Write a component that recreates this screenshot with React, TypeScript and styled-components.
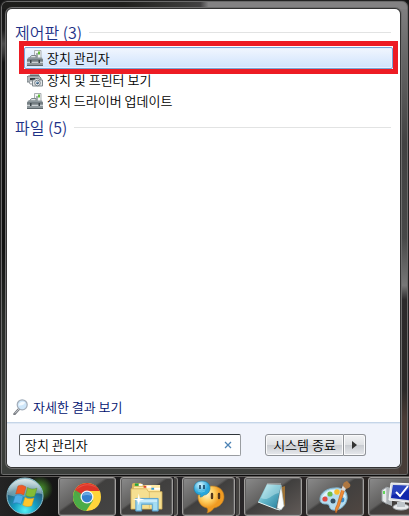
import React, { useState } from "react";
import styled, { createGlobalStyle, css } from "styled-components";

const GlobalStyle = createGlobalStyle`
  * { box-sizing: border-box; }
  body {
    margin: 0;
    background: #151515;
    font-family: "Noto Sans CJK KR", "Noto Sans", sans-serif;
    font-size: 13px;
    font-weight: 350;
    line-height: 20px;
    color: #000;
    overflow: hidden;
  }
  button, input { font: inherit; color: inherit; margin: 0; }
`;

const Desktop = styled.div`
  display: flex;
  flex-direction: column;
  min-height: 100vh;
`;

const MenuFrame = styled.main`
  flex: 1;
  display: flex;
  border: 1px solid #232323;
  border-bottom-color: #0c0c0c;
  border-radius: 7px 7px 3px 3px;
  padding: 8px 8px 8px 6px;
  box-shadow: inset 0 0 0 1px #6a6a6a;
  background:
    linear-gradient(90deg, #1d1d1b, #20201e 30%, #3a3a39 45%, #424142 49%, #838283 51%, #838283) top / 100% 8px no-repeat,
    linear-gradient(180deg, #838283 0, #666 12%, #424242 30%, #484848 50%, #777 60%, #2c2a2b 63%, #2b2928 82%, #4a3b35 88%, #463c38) right / 9px 100% no-repeat,
    linear-gradient(90deg, #3b3e3b, #3c3e3b 60%, #4b413c) bottom / 100% 8px no-repeat,
    linear-gradient(180deg, #161616 0, #1b1b1b 6%, #4c4c4c 9%, #353535 11%, #111 13%, #101110 52%, #292c29 68%, #3b3e3b 88%);
`;

const Panel = styled.div`
  flex: 1;
  display: flex;
  flex-direction: column;
  min-width: 0;
  background: #fff;
  border-radius: 5px;
  box-shadow: 0 0 0 1px #333, 0 0 0 2px #6e6e6e;
`;

const Results = styled.div`
  flex: 1;
  padding: 8px 7px 0 8px;
`;

const Heading = styled.h2`
  display: flex;
  align-items: center;
  gap: 7px;
  height: 30px;
  margin: 0;
  padding-right: 2px;
  font-size: 16px;
  font-weight: 350;
  color: #1e3287;
  &::after {
    content: "";
    flex: 1;
    height: 1px;
    background: #e2e3e3;
  }
`;

const ResultList = styled.ul`
  list-style: none;
  margin: 0;
  padding: 0 0 1px 9px;
`;

const ResultButton = styled.button<{ $selected?: boolean }>`
  position: relative;
  display: flex;
  align-items: center;
  gap: 4px;
  width: 100%;
  height: 21px;
  padding: 0 2px;
  border: 1px solid transparent;
  background: none;
  text-align: left;
  ${(p) =>
    p.$selected &&
    css`
      height: 22px;
      border-color: #78a5d8;
      border-radius: 2px;
      background: linear-gradient(#f1f6fe, #cfe3fd);
      box-shadow: inset 0 0 0 1px #e6f1ff;
      &::after {
        content: "";
        position: absolute;
        z-index: 1;
        inset: -7px -6px -6px;
        border: 5px solid #ed1c24;
        pointer-events: none;
      }
    `}
  svg { flex: none; }
`;

const MoreLink = styled.a`
  align-self: flex-start;
  display: flex;
  align-items: center;
  gap: 4px;
  padding: 0 6px;
  margin-bottom: 5px;
  color: #00106e;
  text-decoration: none;
`;

const Footer = styled.form`
  display: flex;
  align-items: center;
  gap: 24px;
  height: 45px;
  padding: 0 34px 0 12px;
  border-top: 1px solid #c5d5e8;
  box-shadow: inset 0 1px #dfe8f4;
  border-radius: 0 0 5px 5px;
  background: #f0f3fb;
`;

const SearchBox = styled.div`
  flex: 1;
  display: flex;
  min-width: 0;
  height: 22px;
  border: 1px solid #9a9da1;
  border-top-color: #30353a;
  border-left-color: #5b5e62;
  border-radius: 2px;
  background: #fff;
`;

const SearchInput = styled.input`
  flex: 1;
  min-width: 0;
  padding: 0 5px;
  border: 0;
  outline: 0;
  background: none;
`;

const ClearButton = styled.button`
  display: flex;
  align-items: center;
  justify-content: center;
  width: 24px;
  padding: 0;
  border: 0;
  background: none;
`;

const Split = styled.div`
  display: flex;
  height: 22px;
`;

const PowerButton = styled.button<{ $arrow?: boolean }>`
  display: flex;
  align-items: center;
  justify-content: center;
  width: ${(p) => (p.$arrow ? 22 : 79)}px;
  padding: 0;
  white-space: nowrap;
  border: 1px solid #8f9297;
  border-left-width: ${(p) => (p.$arrow ? 0 : 1)}px;
  border-radius: ${(p) => (p.$arrow ? "0 3px 3px 0" : "3px 0 0 3px")};
  box-shadow: inset 0 0 0 1px #fafafb;
  background: linear-gradient(#f2f3f5, #dfe1e4 48%, #c9ccd1 52%, #e7e9ed);
`;

const Taskbar = styled.nav`
  display: flex;
  align-items: stretch;
  height: 40px;
  border-top: 1px solid #5f5c5a;
  overflow: hidden;
  background: linear-gradient(90deg, #242424, #151515 14%, #29272a 50%, #28221f);
`;

const StartButton = styled.button`
  flex: none;
  width: 54px;
  padding: 0;
  border: 0;
  background: none;
  svg { display: block; }
`;

const TaskGroup = styled.div`
  flex: none;
  display: flex;
  width: 62px;
  padding: 0 0 0 4px;
`;

const TaskButton = styled.button<{ $tone: string; $stacked?: boolean }>`
  width: ${(p) => (p.$stacked ? 54 : 58)}px;
  display: flex;
  align-items: center;
  justify-content: center;
  padding: 0;
  border: 1px solid #a09e9c;
  border-radius: 3px;
  box-shadow: inset 0 0 0 1px #605f5f;
  background: linear-gradient(145deg, #8b8b8b 0, #626160 42%, #403f3e 46%, ${(p) => p.$tone});
  svg { display: block; flex: none; overflow: visible; }
`;

const StackEdge = styled.span`
  width: 4px;
  margin-left: 1px;
  border: 1px solid #858380;
  border-left: 0;
  border-radius: 0 3px 3px 0;
  background: #444240;
`;

const DeviceIcon = () => (
  <svg width="16" height="16" viewBox="0 0 16 16" aria-hidden="true">
    <path d="M7.500.5H14V9H7.500z" fill="#f2f4f4" stroke="#a9afb1" />
    <path d="M9 3h2v5H9z" fill="#a3abad" />
    <path d="M11 1.500h2v3h-2z" fill="#62bd3c" />
    <path d="m2.500 8 2-2.500H9V8z" fill="#dde1e3" stroke="#7d868a" />
    <path d="M1 7.500h14l1 2.500H0z" fill="#8d979c" />
    <path d="M0 10h16v5H0z" fill="#8e979b" />
    <path d="M0 9.500h16v1H0zM0 15h16v1H0z" fill="#5c666b" />
    <path d="M0 12h16v1H0z" fill="#cbd1d4" />
    <path d="M3 10h1.500v3H3zM11.500 10H13v3h-1.500z" fill="#3b4449" />
  </svg>
);

const PrinterIcon = () => (
  <svg width="16" height="16" viewBox="0 0 16 16" aria-hidden="true">
    <path d="M3 2.500h9l1 3H2z" fill="#50575b" />
    <path d="M1 4h11l2 2v4H0V5z" fill="#b0b7ba" stroke="#7a8387" />
    <path d="M3 6h7v2H3z" fill="#30373b" />
    <path d="M2 9h7v3H3z" fill="#f5f6f7" stroke="#92999d" />
    <path d="M5.500 8h2l1-1.500h3l1 1.500h3v6h-10z" fill="#e3e6e7" stroke="#7d878c" />
    <circle cx="10.500" cy="11" r="2.800" fill="#fafafa" stroke="#778087" />
    <circle cx="10.500" cy="11" r="1.400" fill="#355875" />
    <circle cx="10" cy="10.400" r=".6" fill="#b7dfff" />
  </svg>
);

const SearchIcon = () => (
  <svg width="16" height="16" viewBox="0 0 16 16" aria-hidden="true">
    <path d="m6 10-4.500 5" stroke="#777b81" strokeWidth="2.600" strokeLinecap="round" />
    <path d="m6 10-4 4.300" stroke="#c8cbd0" strokeWidth="1" />
    <circle cx="9.200" cy="5.800" r="5" fill="#cfe7fa" stroke="#a3adb9" strokeWidth="1.200" />
    <path d="M5.500 6.500c1-4 4-4.500 6.700-3.200-1 2.500-3 3.600-6.700 3.200z" fill="#f3faff" />
  </svg>
);

const StartOrb = () => (
  <svg width="54" height="39" viewBox="0 0 54 39" aria-hidden="true">
    <defs>
      <radialGradient id="orb" cx=".5" cy=".9" r=".9">
        <stop offset="0" stopColor="#54f1f5" />
        <stop offset=".35" stopColor="#159fc3" />
        <stop offset=".7" stopColor="#28617e" />
        <stop offset="1" stopColor="#9fb7c2" />
      </radialGradient>
      <radialGradient id="glow">
        <stop offset="0" stopColor="#4faa2e" stopOpacity=".9" />
        <stop offset="1" stopColor="#4faa2e" stopOpacity="0" />
      </radialGradient>
      <linearGradient id="shine" x2="0" y2="1">
        <stop stopColor="#e8f2f3" stopOpacity=".85" />
        <stop offset="1" stopColor="#c7e3df" stopOpacity=".3" />
      </linearGradient>
    </defs>
    <ellipse cx="40" cy="12" rx="13" ry="13" fill="url(#glow)" />
    <circle cx="25" cy="19" r="18" fill="url(#orb)" stroke="#8bc0cf" />
    <path d="M8 18C8 8 15 2 25 2s17 7 17 15c-8-3-14 3-21 3-5 0-8-1-13-2z" fill="url(#shine)" />
    <path d="M18 9c3-1.500 5-1 8 1l-2.300 8c-2.700-1.700-5-2-8-1z" fill="#ef5b24" stroke="#c34a20" strokeWidth=".5" />
    <path d="M27.500 10.500c3 2 6 2 9.500.7l-2.400 8c-3 1.200-6 1-9-.8z" fill="#85bd35" stroke="#568e29" strokeWidth=".5" />
    <path d="M15.200 18.500c3-1.200 5.500-.8 8 .9l-2.200 8c-3-1.700-5-2-8.200-.9z" fill="#4faee6" stroke="#2b76b5" strokeWidth=".5" />
    <path d="M25 20.200c3 1.700 6 2 9 .8l-2.300 7.800c-3 1.200-6 1-9-.8z" fill="#ffc62b" stroke="#dd9422" strokeWidth=".5" />
  </svg>
);

const ChromeIcon = () => (
  <svg width="30" height="30" viewBox="0 0 30 30" aria-hidden="true">
    <circle cx="15" cy="15" r="14" fill="#ffd43b" />
    <path d="M15 15 2.900 8A14 14 0 0 0 14 29l7-10.500z" fill="#4bac47" />
    <path d="M2.900 8A14 14 0 0 1 27.700 9H15l-6.100 9z" fill="#dc3528" />
    <path d="M2.900 8 9 18.500 9.500 12z" fill="#4bac47" />
    <path d="M4 8A14 14 0 0 1 26 7Q15-1 4 8z" fill="#f0665a" opacity=".6" />
    <circle cx="15" cy="15" r="6.500" fill="#f4f7fa" />
    <circle cx="15" cy="15" r="5.200" fill="#3480cf" />
    <path d="M10.500 14a4.600 4.600 0 0 1 9 0q-4.500-2-9 0z" fill="#6aa9e3" />
  </svg>
);

const FolderIcon = () => (
  <svg width="33" height="31" viewBox="0 0 34 32" aria-hidden="true">
    <path d="M2 4q0-2 2-2h7l2 2h18v22H2z" fill="#d9b85d" />
    <path d="M5 2.500h4V5H5z" fill="#24a23d" /><path d="M9 3h4v2H9z" fill="#fff" />
    <path d="M4 6h10l2-2h15v20H4z" fill="#ffeaa5" />
    <path d="M14 5h3v2h-3z" fill="#dc4632" /><path d="M17 5h5v2h-5z" fill="#fff" />
    <path d="M22 7h3v2h-3z" fill="#309add" /><path d="M25 7h6v2h-6z" fill="#fff" />
    <path d="M1 8h16l2 3h14v18H1z" fill="#f5df91" stroke="#d1ac53" strokeWidth=".8" />
    <path d="M20 11v17" stroke="#e2c36e" />
    <path d="M6 18h23v13h-6v-7H12v7H6z" fill="#8dcaea" stroke="#5aa2ce" />
    <path d="M7 19h21v3H7z" fill="#c9ecfb" /><path d="M7 22h4v8H7zM24 22h4v8h-4z" fill="#a6def2" />
    <path d="m9 13 1 5 5 1-5 1-1 5-1-5-5-1 5-1z" fill="#fff" />
  </svg>
);

const ChatIcon = () => (
  <svg width="34" height="34" viewBox="0 0 34 34" aria-hidden="true">
    <defs>
      <radialGradient id="bubble" cx=".35" cy=".3">
        <stop stopColor="#fff4cc" /><stop offset=".55" stopColor="#ffcf61" /><stop offset="1" stopColor="#f09b22" />
      </radialGradient>
      <radialGradient id="blueBubble" cx=".4" cy=".25">
        <stop stopColor="#d5f5ff" /><stop offset="1" stopColor="#28a7dc" />
      </radialGradient>
    </defs>
    <path d="M20 6c8 0 12 5 12 11 0 5-4 10-10 11-2 3-4 4-7 5 1-2 1-3 0-5-5-1-9-5-9-11C6 10 12 6 20 6z" fill="url(#bubble)" stroke="#b77a21" strokeWidth=".6" />
    <path d="M10 1c5 0 8 3 8 7s-3 7-6 7c-1 1-2 2-4 2l1-2c-4 0-7-3-7-7s3-7 8-7z" fill="url(#blueBubble)" stroke="#157baa" strokeWidth=".6" />
    <path d="M8 5v4M12 5v4" stroke="#164262" strokeWidth="1.600" />
    <path d="M6 11q4 2 7 0" stroke="#61c7eb" fill="none" />
    <path d="M20 14v4M27 14v4" stroke="#53361c" strokeWidth="2.400" strokeLinecap="round" />
  </svg>
);

const NotepadIcon = () => (
  <svg width="32" height="32" viewBox="0 0 32 32" aria-hidden="true">
    <defs><linearGradient id="note" x2="1" y2="1"><stop stopColor="#d0f2f5" /><stop offset=".45" stopColor="#65b8cb" /><stop offset="1" stopColor="#227b9a" /></linearGradient></defs>
    <path d="m25 6 3-1v20l-5 3z" fill="#9d7134" />
    <path d="m24 4 3 21-3 4-4-2z" fill="#fafdfd" stroke="#aabdc1" strokeWidth=".6" />
    <path d="m10 3 14 1-5 24L1 21z" fill="url(#note)" />
    <path d="M10 4 4 17c7 4 11-4 18-5l2-8z" fill="#e8fbfc" opacity=".35" />
    <path d="m1 21 18 7 4 1" stroke="#e3f4f5" fill="none" />
    <path d="M11 4V2m2 2V2m2 2V2m2 2V2m2 2V2m2 2V2m2 2V2" stroke="#bfc3c3" />
  </svg>
);

const PaintIcon = () => (
  <svg width="34" height="34" viewBox="0 0 34 34" aria-hidden="true">
    <path d="M17 8c8-1 13 4 12 11-1 7-8 12-14 11-5-1-2-5-6-6-3 0-7 0-7-5C2 13 9 8 17 8z" fill="#b5dcef" stroke="#7db2cc" />
    <path d="M4 18c2-6 8-9 14-8 6 0 9 4 10 8-8-6-15-5-24 0z" fill="#e1f5fe" />
    <circle cx="7" cy="19" r="2.600" fill="#df4a43" /><circle cx="12" cy="14" r="2.600" fill="#6ebd4a" />
    <circle cx="19" cy="12" r="2.800" fill="#f6bd30" /><circle cx="15" cy="21" r="2.500" fill="#334e60" />
    <circle cx="24" cy="20" r="2.400" fill="#368ac8" />
    <path d="m27 9-6 18-3 6c-1-2-1-5 1-8l5-17z" fill="#ef8b35" stroke="#b85c1c" strokeWidth=".6" />
    <path d="m25 5 4 1-2 5-4-1z" fill="#d8dbdc" />
    <path d="M25 6c0-4 2-4 4-5l3 3c1 2 0 4-4 5z" fill="#ae7741" />
  </svg>
);

const ComputerIcon = () => (
  <svg width="30" height="30" viewBox="0 0 30 30" aria-hidden="true">
    <path d="m0 8 5-3v17l-5-3z" fill="#e5e8ea" stroke="#969da2" />
    <path d="m5 5 5 1v18l-5-2z" fill="#adb3b7" /><path d="M2 9v3" stroke="#41d236" strokeWidth="1.600" />
    <ellipse cx="19" cy="25" rx="8" ry="3" fill="#e8eaec" stroke="#aab0b5" />
    <path d="M15 20h8v5h-8z" fill="#bec5ca" />
    <path d="m9 1 24 1 2 19-28-3z" fill="#d7dbe2" stroke="#f8f9fa" />
    <path d="m11 3 21 1 1 15-24-3z" fill="#1026ac" />
    <path d="m11 3 21 1-9 6-13 3z" fill="#4160cf" opacity=".5" />
    <path d="m14 10 4 4 8-10" fill="none" stroke="#fff" strokeWidth="2" />
  </svg>
);

const tasks = [
  { name: "Chrome", icon: <ChromeIcon />, tone: "#444444" },
  { name: "Windows 탐색기", icon: <FolderIcon />, tone: "#4a4848", stacked: true },
  { name: "메신저", icon: <ChatIcon />, tone: "#575451", stacked: true },
  { name: "메모장", icon: <NotepadIcon />, tone: "#625b58" },
  { name: "그림판", icon: <PaintIcon />, tone: "#514742" },
  { name: "컴퓨터", icon: <ComputerIcon />, tone: "#50433d" },
];

const results = [
  { label: "장치 관리자", icon: <DeviceIcon />, selected: true },
  { label: "장치 및 프린터 보기", icon: <PrinterIcon /> },
  { label: "장치 드라이버 업데이트", icon: <DeviceIcon /> },
];

export default function App() {
  const [query, setQuery] = useState("장치 관리자");
  return (
    <>
      <GlobalStyle />
      <Desktop>
        <MenuFrame>
          <Panel>
            <Results>
              <Heading>제어판 (3)</Heading>
              <ResultList>
                {results.map((r) => (
                  <li key={r.label}>
                    <ResultButton type="button" $selected={r.selected}>
                      {r.icon}
                      {r.label}
                    </ResultButton>
                  </li>
                ))}
              </ResultList>
              <Heading>파일 (5)</Heading>
            </Results>
            <MoreLink href="#results">
              <SearchIcon />
              자세한 결과 보기
            </MoreLink>
            <Footer onSubmit={(e) => e.preventDefault()}>
              <SearchBox>
                <SearchInput aria-label="검색" value={query} onChange={(e) => setQuery(e.target.value)} />
                <ClearButton type="button" aria-label="지우기" onClick={() => setQuery("")}>
                  <svg width="8" height="8" viewBox="0 0 8 8" aria-hidden="true">
                    <path d="m1 1 6 6M7 1 1 7" stroke="#4d83b5" strokeWidth="1.300" />
                  </svg>
                </ClearButton>
              </SearchBox>
              <Split>
                <PowerButton type="button">시스템 종료</PowerButton>
                <PowerButton type="button" $arrow aria-label="종료 옵션">
                  <svg width="5" height="8" viewBox="0 0 5 8" aria-hidden="true">
                    <path d="m0 0 5 4-5 4z" fill="#333" />
                  </svg>
                </PowerButton>
              </Split>
            </Footer>
          </Panel>
        </MenuFrame>
        <Taskbar>
          <StartButton type="button" aria-label="시작">
            <StartOrb />
          </StartButton>
          {tasks.map((t) => (
            <TaskGroup key={t.name}>
              <TaskButton type="button" aria-label={t.name} $tone={t.tone} $stacked={t.stacked}>
                {t.icon}
              </TaskButton>
              {t.stacked && <StackEdge />}
            </TaskGroup>
          ))}
        </Taskbar>
      </Desktop>
    </>
  );
}
